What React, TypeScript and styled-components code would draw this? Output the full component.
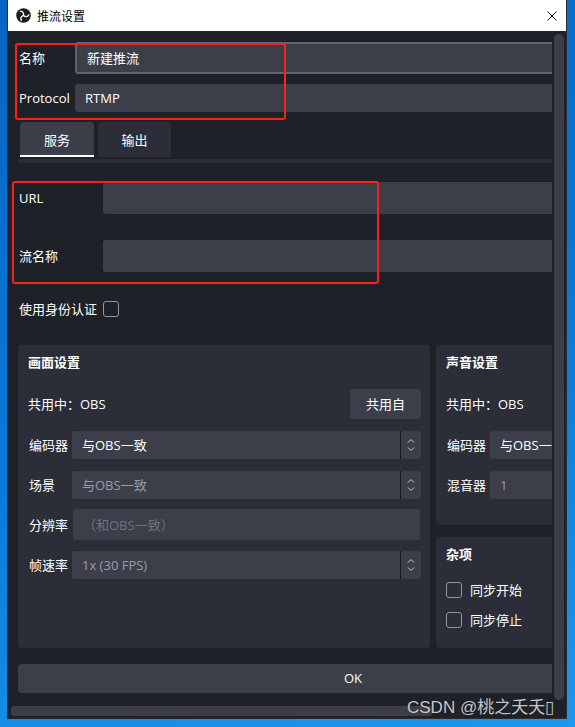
import React from 'react';
import styled, { createGlobalStyle } from 'styled-components';

const Global = createGlobalStyle`
  html, body { margin: 0; padding: 0; }
  body {
    width: 575px; height: 727px; overflow: hidden;
    font-family: "Open Sans", "Noto Sans CJK SC", sans-serif;
    font-size: 13px;
  }
  #root { width: 575px; height: 727px; }
  * { box-sizing: border-box; }
`;

const C = {
  bg: '#1f2129',
  field: '#3c3f4a',
  group: '#2b2e38',
  text: '#ffffff',
  dim: '#9a9ca4',
  ph: '#6f727b',
  scroll: '#3c3f49',
};

const Desktop = styled.div`
  position: relative;
  width: 575px;
  height: 727px;
  overflow: hidden;
  background: linear-gradient(165deg, #0864c4 0%, #0a7ad8 55%, #1c98ee 100%);
`;

const Window = styled.div`
  margin-left: 7px;
  width: 560px;
  height: 719px;
  display: flex;
  flex-direction: column;
  border: 1px solid #2a2c34;
  border-top: none;
`;

const TitleBar = styled.div`
  height: 31px;
  flex: none;
  background: #ffffff;
  display: flex;
  align-items: center;
  padding: 0 9px 0 8px;
`;

const TitleText = styled.span`
  margin-left: 6px;
  flex: 1;
  font-size: 12px;
  color: #000;
  font-family: "Noto Sans CJK SC", sans-serif;
`;

const Body = styled.div`
  flex: 1;
  background: ${C.bg};
  display: flex;
  flex-direction: column;
`;

const Main = styled.div`
  height: 673px;
  display: flex;
`;

const Viewport = styled.div`
  width: 544px;
  overflow: hidden;
`;

const VScroll = styled.div`
  width: 10px;
  margin: 3px 2px 4px 2px;
  background: ${C.scroll};
  border-radius: 5px;
`;

const HScrollRow = styled.div`
  margin-top: 2px;
  height: 10px;
  padding-left: 3px;
`;

const HThumb = styled.div`
  width: 421px;
  height: 10px;
  background: ${C.scroll};
  border-radius: 3px;
`;

const Content = styled.div`
  width: 680px;
  padding: 11px 0 0 10px;
  color: ${C.text};
`;

const Row = styled.div<{ $h: number; $mt?: number }>`
  display: flex;
  align-items: center;
  height: ${(p) => p.$h}px;
  margin-top: ${(p) => p.$mt ?? 0}px;
`;

const Label = styled.div<{ $w: number }>`
  width: ${(p) => p.$w}px;
  flex: none;
  padding-left: 1px;
  padding-bottom: 1px;
  white-space: nowrap;
`;

const Field = styled.div<{ $focus?: boolean; $dim?: boolean; $ph?: boolean; $inset?: number }>`
  flex: 1;
  height: 100%;
  margin: 0 ${(p) => p.$inset ?? 0}px;
  background: ${C.field};
  border-radius: 3px;
  display: flex;
  align-items: center;
  padding: 0 10px 1px;
  border: ${(p) => (p.$focus ? '2px solid #60636d' : 'none')};
  color: ${(p) => (p.$ph ? C.ph : p.$dim ? C.dim : C.text)};
  white-space: nowrap;
`;

const SelectBox = styled.div`
  flex: 1;
  height: 100%;
  background: ${C.field};
  border-radius: 3px;
  display: flex;
  overflow: hidden;
`;

const SelectText = styled.div<{ $dim?: boolean }>`
  flex: 1;
  display: flex;
  align-items: center;
  padding: 0 0 1px 10px;
  white-space: nowrap;
  overflow: hidden;
  color: ${(p) => (p.$dim ? C.dim : C.text)};
`;

const SelectArrow = styled.div`
  width: 21px;
  flex: none;
  border-left: 1px solid #17181d;
  display: flex;
  align-items: center;
  justify-content: center;
`;

const TabBar = styled.div`
  display: flex;
  gap: 4px;
  padding-left: 2px;
  margin-top: 10px;
  height: 35px;
`;

const Tab = styled.div<{ $active?: boolean; $w: number }>`
  width: ${(p) => p.$w}px;
  height: 35px;
  border-radius: 4px 4px 0 0;
  background: ${(p) => (p.$active ? '#3b3e48' : C.group)};
  box-shadow: ${(p) => (p.$active ? 'inset 0 -2px 0 #ffffff' : 'none')};
  display: flex;
  align-items: center;
  justify-content: center;
  padding-bottom: 1px;
`;

const PaneTop = styled.div`
  margin-top: 2px;
  height: 4px;
  background: ${C.group};
`;

const Check = styled.div`
  width: 16px;
  height: 16px;
  flex: none;
  border: 1.5px solid #93959d;
  border-radius: 3px;
`;

const CheckLabel = styled.span<{ $ml: number }>`
  margin-left: ${(p) => p.$ml}px;
  padding-bottom: 1px;
`;

const PlainText = styled.span`
  padding-bottom: 1px;
`;

const GroupsRow = styled.div`
  display: flex;
  gap: 6px;
  margin-top: 28px;
`;

const RightCol = styled.div`
  width: 252px;
  display: flex;
  flex-direction: column;
  gap: 12px;
`;

const Group = styled.div<{ $w?: number; $h: number }>`
  width: ${(p) => (p.$w ? `${p.$w}px` : 'auto')};
  height: ${(p) => p.$h}px;
  background: ${C.group};
  border-radius: 4px;
  padding: 9px 9px 0 10px;
`;

const GroupTitle = styled.div`
  height: 16px;
  line-height: 15px;
  font-weight: 700;
  font-family: "Noto Sans CJK SC", sans-serif;
`;

const Spacer = styled.div`
  flex: 1;
`;

const Button = styled.div`
  width: 71px;
  height: 30px;
  background: ${C.field};
  border-radius: 4px;
  display: flex;
  align-items: center;
  justify-content: center;
  padding-bottom: 1px;
`;

const OkButton = styled.div`
  margin-top: 16px;
  width: 670px;
  height: 29px;
  background: ${C.field};
  border-radius: 4px;
  display: flex;
  align-items: center;
  justify-content: center;
  padding-bottom: 1px;
`;

const RedBox = styled.div<{ $l: number; $t: number; $w: number; $h: number }>`
  position: absolute;
  left: ${(p) => p.$l}px;
  top: ${(p) => p.$t}px;
  width: ${(p) => p.$w}px;
  height: ${(p) => p.$h}px;
  border: 2px solid #f5231c;
  border-radius: 3px;
  pointer-events: none;
`;

const Watermark = styled.div`
  position: absolute;
  left: 407px;
  top: 699px;
  font-family: "Liberation Sans", "Noto Sans CJK SC", sans-serif;
  font-size: 17px;
  line-height: 17px;
  color: rgba(225, 225, 225, 0.88);
  text-shadow: 0 0 1px rgba(0, 0, 0, 0.5);
  white-space: nowrap;
`;

const Chevrons = () => (
  <svg width="8" height="14" viewBox="0 0 8 14">
    <path d="M1 4.5 L4 1.5 L7 4.5" fill="none" stroke="#c9cbd0" strokeWidth="1" />
    <path d="M1 9.5 L4 12.5 L7 9.5" fill="none" stroke="#c9cbd0" strokeWidth="1" />
  </svg>
);

const ObsLogo = () => (
  <svg width="15" height="15" viewBox="0 0 16 16">
    <circle cx="8" cy="8" r="7.8" fill="#1c1c1c" />
    <g fill="none" stroke="#ffffff" strokeWidth="1.4" strokeLinecap="round">
      <path d="M8 8 Q8.6 3.6 4.6 3.4" />
      <path d="M8 8 Q8.6 3.6 4.6 3.4" transform="rotate(120 8 8)" />
      <path d="M8 8 Q8.6 3.6 4.6 3.4" transform="rotate(240 8 8)" />
    </g>
  </svg>
);

const CloseIcon = () => (
  <svg width="10" height="10" viewBox="0 0 10 10">
    <path d="M0.5 0.5 L9.5 9.5 M9.5 0.5 L0.5 9.5" stroke="#111" strokeWidth="1" />
  </svg>
);

const Select = ({ value, dim }: { value: string; dim?: boolean }) => (
  <SelectBox>
    <SelectText $dim={dim}>{value}</SelectText>
    <SelectArrow>
      <Chevrons />
    </SelectArrow>
  </SelectBox>
);

export default function App() {
  return (
    <Desktop>
      <Global />
      <Window>
        <TitleBar>
          <ObsLogo />
          <TitleText>推流设置</TitleText>
          <CloseIcon />
        </TitleBar>
        <Body>
          <Main>
            <Viewport>
              <Content>
                <Row $h={32}>
                  <Label $w={57}>名称</Label>
                  <Field $focus>新建推流</Field>
                </Row>
                <Row $h={28} $mt={10}>
                  <Label $w={57}>Protocol</Label>
                  <Field>RTMP</Field>
                </Row>
                <TabBar>
                  <Tab $active $w={74}>服务</Tab>
                  <Tab $w={73}>输出</Tab>
                </TabBar>
                <PaneTop />
                <Row $h={32} $mt={19}>
                  <Label $w={85}>URL</Label>
                  <Field />
                </Row>
                <Row $h={32} $mt={26}>
                  <Label $w={85}>流名称</Label>
                  <Field />
                </Row>
                <Row $h={16} $mt={29}>
                  <Label $w={85}>使用身份认证</Label>
                  <Check />
                </Row>
                <GroupsRow>
                  <Group $w={412} $h={303}>
                    <GroupTitle>画面设置</GroupTitle>
                    <Row $h={30} $mt={19}>
                      <PlainText>共用中：OBS</PlainText>
                      <Spacer />
                      <Button>共用自</Button>
                    </Row>
                    <Row $h={28} $mt={12}>
                      <Label $w={44}>编码器</Label>
                      <Select value="与OBS一致" />
                    </Row>
                    <Row $h={28} $mt={12}>
                      <Label $w={44}>场景</Label>
                      <Select value="与OBS一致" dim />
                    </Row>
                    <Row $h={31} $mt={10}>
                      <Label $w={44}>分辨率</Label>
                      <Field $ph $inset={1}>（和OBS一致）</Field>
                    </Row>
                    <Row $h={28} $mt={11}>
                      <Label $w={44}>帧速率</Label>
                      <Select value="1x (30 FPS)" dim />
                    </Row>
                  </Group>
                  <RightCol>
                    <Group $h={180}>
                      <GroupTitle>声音设置</GroupTitle>
                      <Row $h={30} $mt={19}>
                        <PlainText>共用中：OBS</PlainText>
                      </Row>
                      <Row $h={28} $mt={12}>
                        <Label $w={44}>编码器</Label>
                        <Select value="与OBS一致" />
                      </Row>
                      <Row $h={28} $mt={12}>
                        <Label $w={44}>混音器</Label>
                        <Field $dim>1</Field>
                      </Row>
                    </Group>
                    <Group $h={111}>
                      <GroupTitle>杂项</GroupTitle>
                      <Row $h={16} $mt={20}>
                        <Check />
                        <CheckLabel $ml={8}>同步开始</CheckLabel>
                      </Row>
                      <Row $h={16} $mt={14}>
                        <Check />
                        <CheckLabel $ml={8}>同步停止</CheckLabel>
                      </Row>
                    </Group>
                  </RightCol>
                </GroupsRow>
                <OkButton>OK</OkButton>
              </Content>
            </Viewport>
            <VScroll />
          </Main>
          <HScrollRow>
            <HThumb />
          </HScrollRow>
        </Body>
      </Window>
      <RedBox $l={15} $t={43} $w={271} $h={77} />
      <RedBox $l={12} $t={181} $w={367} $h={103} />
      <Watermark>CSDN @桃之夭夭▯</Watermark>
    </Desktop>
  );
}
